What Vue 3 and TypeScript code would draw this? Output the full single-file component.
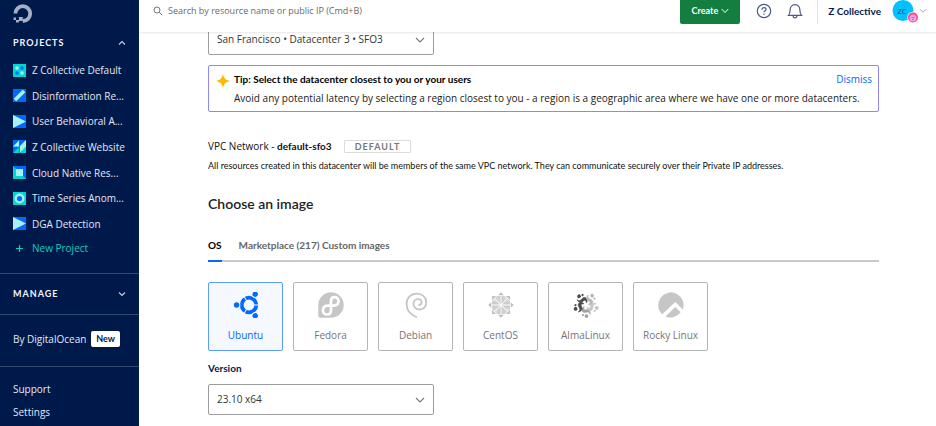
<script setup lang="ts">
import { ref } from 'vue'

interface Project {
  name: string
  icon: 'dots' | 'slash' | 'play' | 'grid' | 'square' | 'ring'
}

const projects: Project[] = [
  { name: 'Z Collective Default', icon: 'dots' },
  { name: 'Disinformation Re...', icon: 'slash' },
  { name: 'User Behavioral A...', icon: 'play' },
  { name: 'Z Collective Website', icon: 'grid' },
  { name: 'Cloud Native Res...', icon: 'square' },
  { name: 'Time Series Anom...', icon: 'ring' },
  { name: 'DGA Detection', icon: 'play' },
]

const images = ['Ubuntu', 'Fedora', 'Debian', 'CentOS', 'AlmaLinux', 'Rocky Linux']
const selected = ref('Ubuntu')
const tipOpen = ref(true)
</script>

<template>
  <div class="app">
    <aside class="sidebar">
      <a class="logo" href="#" aria-label="DigitalOcean home">
        <svg viewBox="0 0 20 20" width="20" height="20">
          <path d="M9.800 17A7.400 7.400 0 1 0 2.400 9.600" fill="none" stroke="#a6b0c4" stroke-width="3.800" />
          <path d="M5.900 13h3.900v4H5.900zM3 16h2.900v2.600H3zM.6 13.400H3V16H.6z" fill="#a6b0c4" />
        </svg>
      </a>

      <button class="group" type="button">
        <span>PROJECTS</span>
        <svg viewBox="0 0 8 6" width="8" height="6"><path d="M1 4.500 4 1.500l3 3" /></svg>
      </button>

      <ul class="projects">
        <li v-for="p in projects" :key="p.name">
          <a href="#">
            <svg viewBox="0 0 13 13" width="13" height="13">
              <template v-if="p.icon === 'dots'">
                <rect width="13" height="13" fill="#00d7d2" />
                <circle cx="4" cy="4" r="1.800" fill="#a5f3f0" />
                <circle cx="9" cy="4" r="1.800" fill="#0069ff" />
                <circle cx="4" cy="9" r="1.800" fill="#0069ff" />
                <circle cx="9" cy="9" r="1.800" fill="#a5f3f0" />
              </template>
              <template v-else-if="p.icon === 'slash'">
                <rect width="13" height="13" fill="#0069ff" />
                <path d="M3.200 9.800 9.800 3.200" stroke="#a5f3f0" stroke-width="3.600" stroke-linecap="square" />
              </template>
              <template v-else-if="p.icon === 'play'">
                <rect width="13" height="13" fill="#0069ff" />
                <path d="M0 0 13 6.500 0 13z" fill="#a5f3f0" />
              </template>
              <template v-else-if="p.icon === 'grid'">
                <rect width="13" height="13" fill="#00d7d2" />
                <path d="M0 0h6.500L0 6.500zM6.500 0H13L6.500 6.500zM0 6.500h6.500L0 13z" fill="#0069ff" />
                <path d="M6.500 0v6.500H0zM13 0v6.500H6.500zM13 6.500 6.500 13V6.500z" fill="#a5f3f0" />
                <path d="M6.500 0v13" stroke="#0b3f8f" stroke-width=".6" />
              </template>
              <template v-else-if="p.icon === 'square'">
                <rect width="13" height="13" fill="#00d7d2" />
                <path d="M0 0h13v13z" fill="#0069ff" />
                <rect x="3" y="3" width="7" height="7" fill="#a5f3f0" />
              </template>
              <template v-else>
                <rect width="13" height="13" fill="#00d7d2" />
                <circle cx="6.500" cy="6.500" r="5" fill="#a5f3f0" />
                <circle cx="6.500" cy="6.500" r="2.600" fill="#0069ff" />
              </template>
            </svg>
            <span>{{ p.name }}</span>
          </a>
        </li>
      </ul>
      <a class="new-project" href="#">
        <svg viewBox="0 0 13 13" width="13" height="13"><path d="M6.500 3v7M3 6.500h7" /></svg>
        <span>New Project</span>
      </a>

      <div class="section">
        <button class="group" type="button">
          <span>MANAGE</span>
          <svg viewBox="0 0 8 6" width="8" height="6"><path d="M1 1.500l3 3 3-3" /></svg>
        </button>
      </div>
      <div class="section by">
        <a href="#">By DigitalOcean</a>
        <span class="new">New</span>
      </div>
      <nav class="links">
        <a href="#">Support</a>
        <a href="#">Settings</a>
      </nav>
    </aside>

    <div class="page">
      <header class="topbar">
        <label class="search">
          <svg viewBox="0 0 10 10" width="10" height="10">
            <circle cx="4" cy="4" r="3" />
            <path d="M6.300 6.300 9.200 9.200" />
          </svg>
          <input type="search" aria-label="Search" placeholder="Search by resource name or public IP (Cmd+B)" />
        </label>
        <button class="create" type="button">
          <span>Create</span>
          <svg viewBox="0 0 8 6" width="8" height="6"><path d="M.7 1 4 4.500 7.300 1" /></svg>
        </button>
        <button class="icon-button help" type="button" aria-label="Help">
          <svg viewBox="0 0 16 16" width="16" height="16">
            <circle cx="8" cy="8" r="6.700" />
            <path d="M6 6.700C6 5.300 6.900 4.700 8 4.700s2 .7 2 1.700c0 1.400-2 1.400-2 2.900M8 10.600v1.200" />
          </svg>
        </button>
        <button class="icon-button bell" type="button" aria-label="Notifications">
          <svg viewBox="0 0 16 16" width="16" height="16">
            <path d="M1.500 12.300h13c-1.600-1.600-1.600-2.800-1.600-5.300 0-3.300-2-5.300-4.900-5.300S3.100 3.700 3.100 7c0 2.500 0 3.700-1.600 5.300zM6 12.500c.1 1.700.8 2.400 2 2.400s1.900-.7 2-2.400" />
          </svg>
        </button>
        <div class="account">
          <span class="team">Z Collective</span>
          <button class="profile" type="button" aria-label="Account menu">
            <svg class="avatar" viewBox="0 0 27 24" width="27" height="24">
              <circle cx="11" cy="10.500" r="10.500" fill="#00c2ff" />
              <text x="10" y="14" text-anchor="middle">ZC</text>
              <circle cx="21" cy="17.500" r="5.700" fill="#fff" />
              <circle cx="21" cy="17.500" r="5" fill="#f7477d" />
              <circle cx="21" cy="18" r="3.500" fill="#f5a3ee" />
              <path d="M19.300 17.500h3.400M20 19.500h2" stroke="#c04bd0" stroke-width=".8" />
            </svg>
            <svg class="chevron" viewBox="0 0 8 6" width="8" height="6"><path d="M1 1.300l3 3 3-3" /></svg>
          </button>
        </div>
      </header>

      <main class="content">
        <div class="select">
          <select aria-label="Datacenter">
            <option>San Francisco • Datacenter 3 • SFO3</option>
          </select>
          <svg viewBox="0 0 10 6" width="10" height="6"><path d="M1 1l4 4 4-4" /></svg>
        </div>

        <section v-if="tipOpen" class="tip">
          <svg viewBox="0 0 14 14" width="14" height="14">
            <path d="M7 0C8 4.200 9.500 6 14 7c-4.500 1-6 2.800-7 7C6 9.800 4.500 8 0 7c4.500-1 6-2.800 7-7z" fill="#ffb800" />
          </svg>
          <div class="tip-body">
            <div class="tip-head">
              <strong>Tip: Select the datacenter closest to you or your users</strong>
              <button type="button" @click="tipOpen = false">Dismiss</button>
            </div>
            <p>Avoid any potential latency by selecting a region closest to you - a region is a geographic area where we have one or more datacenters.</p>
          </div>
        </section>

        <section class="vpc">
          <div class="vpc-head">
            <span>VPC Network - <b>default-sfo3</b></span>
            <span class="badge">DEFAULT</span>
          </div>
          <p>All resources created in this datacenter will be members of the same VPC network. They can communicate securely over their Private IP addresses.</p>
        </section>

        <h2>Choose an image</h2>
        <nav class="tabs">
          <a class="active" href="#">OS</a>
          <span><a href="#">Marketplace (217)</a> <a href="#">Custom images</a></span>
        </nav>

        <div class="images">
          <button
            v-for="name in images"
            :key="name"
            type="button"
            :class="{ chosen: selected === name }"
            :aria-pressed="selected === name"
            @click="selected = name"
          >
            <svg viewBox="0 0 26 26" width="26" height="26">
              <template v-if="name === 'Ubuntu'">
                <circle cx="16" cy="13" r="7.300" fill="none" stroke="currentColor" stroke-width="3.800" />
                <g v-for="a in [0, 120, 240]" :key="a" :transform="`rotate(${a} 16 13)`">
                  <path d="M20 13h7" class="cut" />
                  <circle cx="3.600" cy="13" r="3.800" class="halo" />
                  <circle cx="3.600" cy="13" r="2.700" fill="currentColor" />
                </g>
              </template>
              <template v-else-if="name === 'Fedora'">
                <path d="M13 .3a12.700 12.700 0 1 1 0 25.400H2.300A2 2 0 0 1 .3 23.700V13A12.700 12.700 0 0 1 13 .3z" fill="#c6c6c6" />
                <path d="M9.500 13.600h6.800M13 13.600V9.300C13 6.700 14.600 5.200 16.700 5.200s3.800 1.600 3.800 3.900-1.600 4.300-4.200 4.500M13 13.600v4.700c0 2.500-1.700 4.200-4.100 4.200a4 4 0 0 1-4-4c0-2.700 1.900-4.700 4.600-4.900" fill="none" stroke="#fff" stroke-width="2.700" stroke-linecap="round" />
              </template>
              <template v-else-if="name === 'Debian'">
                <path d="M13.300 25C7 22.500 3.600 17.500 3.600 12 3.600 5.500 8 1.600 13.600 1.600c5.800 0 9.700 3.900 9.700 8.600 0 4.500-3.300 7.300-6.800 7.300-3.600 0-6-2.700-6-5.700 0-2.700 1.900-4.700 4.400-4.700 2.200 0 3.700 1.500 3.700 3.200 0 1.600-1.100 2.600-2.600 2.700" fill="none" stroke="#c6c6c6" stroke-width="1.800" stroke-linecap="round" />
              </template>
              <template v-else-if="name === 'CentOS'">
                <g v-for="a in [0, 90, 180, 270]" :key="a" :transform="`rotate(${a} 13 13)`">
                  <path d="M13 .3 15.800 3.200h-5.600z" fill="#bcbcbc" />
                  <path d="M8.700 4h8.600v4L13 12.400 8.700 8z" fill="#d2d2d2" />
                  <path d="M17.800 4H22v4.200z" fill="#c2c2c2" />
                  <path d="M17.400 4.500 21.500 8.600 17.500 12.300H13.600V11.900L17.400 8.200z" fill="#d6d6d6" />
                  <path d="M13 3.500v9M13.500 12.500l6.500-6.500" stroke="#fff" stroke-width=".8" />
                  <path d="M11.300 4.500v5.200M14.700 4.500v5.200" stroke="#c0c0c0" stroke-width=".5" />
                </g>
              </template>
              <template v-else-if="name === 'AlmaLinux'">
                <g
                  v-for="(c, i) in ['#4b4b4b', '#b8b8b8', '#c6c6c6', '#a2a2a2', '#4b4b4b']"
                  :key="i"
                  :transform="`rotate(${-36 + i * 72} 13 13)`"
                >
                  <circle cx="12.500" cy="1.900" r="1.900" :fill="c" />
                  <circle cx="16.100" cy="2.900" r="1.100" :fill="c" />
                  <path d="M8.800 3.500c.5 2.500 2.400 2.800 4.300 2.200 2.800-.8 4.500.8 4 3.100-.3 1.200-1.100 2-2.300 2.600 1-2.400.3-3.600-1.500-3.200-2.900.6-5-.9-4.500-4.700z" :fill="c" :stroke="c" stroke-width=".6" />
                </g>
              </template>
              <template v-else>
                <path d="M4.200 22.300A12.700 12.700 0 1 1 24.800 17.600L17.300 10.100z" fill="#c6c6c6" />
                <path d="M7.500 24.500 17.300 14.900 22.600 20.200A12.700 12.700 0 0 1 7.500 24.500z" fill="#c6c6c6" />
              </template>
            </svg>
            <span>{{ name }}</span>
          </button>
        </div>

        <label class="version" for="version">Version</label>
        <div class="select">
          <select id="version">
            <option>23.10 x64</option>
          </select>
          <svg viewBox="0 0 10 6" width="10" height="6"><path d="M1 1l4 4 4-4" /></svg>
        </div>
      </main>
    </div>
  </div>
</template>

<style>
body {
  background: #fff;
}
</style>

<style scoped>
.app {
  --body: "Open Sans", "Noto Sans", sans-serif;
  --strong: Lato, "Liberation Sans", sans-serif;
  display: flex;
  min-height: 100vh;
  font: 10px/16px var(--body);
  color: #222;
}
button, input, select {
  font: inherit;
  color: inherit;
  margin: 0;
  padding: 0;
  border: 0;
  background: none;
  outline: 0;
}
button { cursor: pointer; }
a { color: inherit; text-decoration: none; }
p, h2, ul { margin: 0; padding: 0; font-weight: 400; }
ul { list-style: none; }
svg { display: block; flex: none; }

.sidebar {
  flex: none;
  box-sizing: border-box;
  width: 139px;
  padding-top: 4px;
  background: #00194b;
  color: #e3e8f4;
}
.logo { display: block; padding-left: 13px; }
.group {
  display: flex;
  box-sizing: border-box;
  align-items: center;
  justify-content: space-between;
  width: 100%;
  padding: 0 13px;
  font: 700 9px/16px var(--strong);
  letter-spacing: 1px;
  color: #f3f5fa;
}
.logo + .group { margin-top: 11px; }
.group path { fill: none; stroke: #c3cbe0; stroke-width: 1.2; }
.projects {
  display: flex;
  flex-direction: column;
  justify-content: space-between;
  height: 170px;
  margin-top: 11px;
  padding-left: 13px;
}
.projects a, .new-project {
  display: flex;
  align-items: center;
  gap: 6px;
  white-space: nowrap;
}
.new-project {
  margin: 8px 0 17px;
  padding-left: 13px;
  color: #15cdb9;
}
.new-project path { stroke: #15cdb9; stroke-width: 1.2; }
.section {
  display: flex;
  align-items: center;
  box-sizing: border-box;
  height: 41px;
  border-top: 1px solid #34476f;
}
.by { gap: 5px; height: 52px; padding: 0 0 3px 13px; }
.new {
  padding: 0 5px;
  border-radius: 2px;
  background: #fff;
  color: #00194b;
  font: 700 9px/16px var(--strong);
}
.links {
  display: flex;
  flex-direction: column;
  gap: 7px;
  padding: 14px 13px;
  border-top: 1px solid #34476f;
}

.page { flex: 1; min-width: 0; }
.topbar {
  position: relative;
  z-index: 1;
  display: flex;
  box-sizing: border-box;
  height: 32px;
  padding: 0 9px 0 14px;
  background: #fff;
  box-shadow: 0 1px 2px #0000001a;
}
.search {
  display: flex;
  flex: 1;
  align-items: center;
  gap: 5px;
  height: 22px;
}
.search circle, .search path { fill: none; stroke: #777; stroke-width: 1; }
.search input { flex: 1; min-width: 0; font-size: 9px; }
.search input::placeholder { color: #6a6a6a; opacity: 1; }
.create {
  display: flex;
  align-items: center;
  gap: 3px;
  height: 24px;
  padding: 0 11px 3px 12px;
  border-radius: 0 0 2px 2px;
  background: #147d40;
  color: #fff;
  font: 700 9px/16px var(--strong);
}
.create path { fill: none; stroke: #fff; stroke-width: 1; }
.icon-button { height: 22px; }
.icon-button path, .icon-button circle { fill: none; stroke: #4a5b84; stroke-width: 1.2; }
.help { margin-left: 16px; }
.bell { margin-left: 15px; }
.account {
  display: flex;
  align-items: center;
  gap: 11px;
  height: 24px;
  margin-left: 14px;
  padding-left: 10px;
  border-left: 1px solid #e3e3e3;
}
.team { padding-bottom: 3px; font: 700 10px/16px var(--strong); color: #031b4e; }
.profile { display: flex; align-items: center; height: 24px; }
.avatar text { font: 8px var(--body); fill: #0a4a86; }
.chevron { margin-bottom: 3px; }
.chevron path { fill: none; stroke: #9aa5bf; stroke-width: 1; }

.content { margin-top: -8px; padding: 0 57px 11px 69px; }
.select {
  display: grid;
  align-items: center;
  width: 226px;
}
.select select, .select svg { grid-area: 1 / 1; }
.select select {
  appearance: none;
  box-sizing: border-box;
  width: 100%;
  height: 31px;
  padding: 0 26px 2px 8px;
  border: 1px solid #9c9c9c;
  border-radius: 2px;
  background: #fff;
  color: #333;
}
.select svg { justify-self: end; margin-right: 9px; pointer-events: none; }
.select path { fill: none; stroke: #777; stroke-width: 1.1; }

.tip {
  display: flex;
  gap: 4px;
  margin-top: 10px;
  padding: 5px 6px 5px 7px;
  border: 1px solid #8f86f7;
  border-radius: 2px;
}
.tip > svg { margin-top: 3px; }
.tip-body { flex: 1; color: #1a1a1a; }
.tip-head { display: flex; justify-content: space-between; }
.tip-head strong { font: 700 10px/16px var(--strong); color: #000; }
.tip-head button { color: #0069ff; }
.tip p { margin-top: 3px; }

.vpc { margin-top: 26px; color: #111; }
.vpc-head { display: flex; align-items: center; gap: 12px; }
.vpc-head b { font: 700 10px/16px var(--strong); }
.badge {
  padding: 0 10px;
  border: 1px solid #dcdcdc;
  border-radius: 1px;
  font: 700 9px/11px var(--strong);
  letter-spacing: 1px;
  color: #777;
}
.vpc p { margin-top: 4px; font: 9px/16px var(--strong); }

h2 { margin-top: 20px; font: 600 14px/20px var(--strong); color: #222; }
.tabs {
  display: flex;
  gap: 17px;
  margin-top: 23px;
  border-bottom: 2px solid #c9c9c9;
  font: 700 10px/16px var(--strong);
  color: #666;
}
.tabs > * { padding-bottom: 7px; }
.active { margin-bottom: -2px; border-bottom: 2px solid #0069ff; color: #000; }

.images { display: flex; flex-wrap: wrap; gap: 10px; margin-top: 20px; }
.images button {
  display: flex;
  box-sizing: border-box;
  flex-direction: column;
  align-items: center;
  gap: 9px;
  width: 75px;
  height: 69px;
  padding-top: 9px;
  border: 1px solid #b5b5b5;
  border-radius: 2px;
  background: #fff;
  color: #757575;
}
.images .chosen { border-color: #5b9cff; background: #f5f8ff; color: #0069ff; }
.cut { stroke: #f5f8ff; stroke-width: 1; }
.halo { fill: #f5f8ff; }
.version {
  display: block;
  margin: 9px 0 8px;
  font: 700 10px/16px var(--strong);
  color: #031b4e;
}
</style>
